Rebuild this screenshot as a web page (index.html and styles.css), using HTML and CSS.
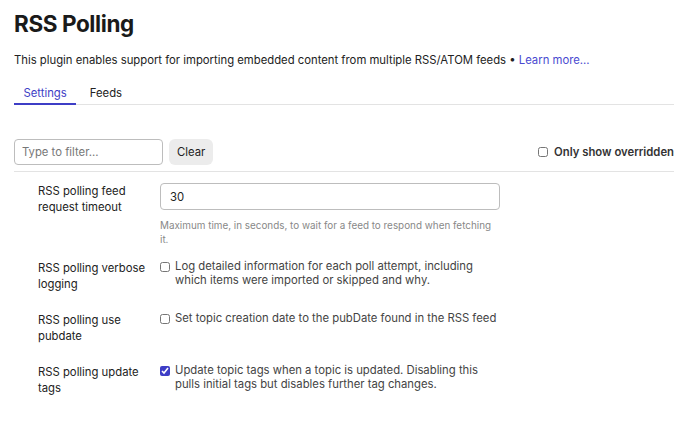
FILE: index.html
```html
<!DOCTYPE html>
<html>
<head>
  <meta charset="utf-8">
  <link rel="stylesheet" href="styles.css">
</head>
<body>
  <div class="plugin-page">
    <h1 class="plugin-title">RSS Polling</h1>
    <p class="plugin-desc">This plugin enables support for importing embedded content from multiple RSS/ATOM feeds &bull; <a href="#">Learn more...</a></p>

    <div class="tabs">
      <a class="tab active" href="#">Settings</a>
      <a class="tab" href="#">Feeds</a>
    </div>

    <div class="filter-bar">
      <div class="filter-left">
        <input class="filter-input" type="text" placeholder="Type to filter...">
        <button class="clear-btn">Clear</button>
      </div>
      <label class="overridden">
        <input type="checkbox">
        <span>Only show overridden</span>
      </label>
    </div>

    <div class="settings">
      <div class="setting-row">
        <div class="setting-label">RSS polling feed request timeout</div>
        <div class="setting-value">
          <input class="text-input" type="text" value="30">
          <div class="help">Maximum time, in seconds, to wait for a feed to respond when fetching it.</div>
        </div>
      </div>

      <div class="setting-row">
        <div class="setting-label">RSS polling verbose logging</div>
        <div class="setting-value">
          <label class="check">
            <input type="checkbox">
            <span>Log detailed information for each poll attempt, including which items were imported or skipped and why.</span>
          </label>
        </div>
      </div>

      <div class="setting-row">
        <div class="setting-label">RSS polling use pubdate</div>
        <div class="setting-value">
          <label class="check">
            <input type="checkbox">
            <span>Set topic creation date to the pubDate found in the RSS feed</span>
          </label>
        </div>
      </div>

      <div class="setting-row">
        <div class="setting-label">RSS polling update tags</div>
        <div class="setting-value">
          <label class="check">
            <input type="checkbox" checked>
            <span>Update topic tags when a topic is updated. Disabling this pulls initial tags but disables further tag changes.</span>
          </label>
        </div>
      </div>
    </div>
  </div>
</body>
</html>
```

FILE: styles.css
```css
* {
  box-sizing: border-box;
  margin: 0;
  padding: 0;
}

body {
  font-family: Inter, "Noto Sans", sans-serif;
  font-size: 11.3px;
  color: #222;
  background: #fff;
}

.plugin-page {
  padding: 10px 16px 0 14px;
}

.plugin-title {
  font-size: 22.5px;
  font-weight: 700;
  line-height: 28px;
  letter-spacing: -0.4px;
  color: #1a1a1a;
}

.plugin-desc {
  margin-top: 14px;
  font-size: 11.3px;
  line-height: 16px;
}

.plugin-desc a {
  color: #4a4ad0;
  text-decoration: none;
}

.tabs {
  display: flex;
  gap: 4px;
  margin-top: 11px;
  border-bottom: 1px solid #e3e3e3;
}

.tab {
  font-size: 11.3px;
  line-height: 16px;
  padding: 6px 9.5px 2px;
  color: #222;
  text-decoration: none;
  border-bottom: 2px solid transparent;
  margin-bottom: -1px;
}

.tab.active {
  color: #3e3ec6;
  border-bottom-color: #3e3ec6;
}

.filter-bar {
  display: flex;
  justify-content: space-between;
  align-items: center;
  margin-top: 34px;
  padding-bottom: 6px;
  border-bottom: 1px solid #e3e3e3;
}

.filter-left {
  display: flex;
  gap: 6px;
}

.filter-input {
  width: 149px;
  height: 26px;
  padding: 0 7px;
  border: 1px solid #bdbdbd;
  border-radius: 4px;
  font-family: inherit;
  font-size: 11.3px;
  color: #222;
}

.filter-input::placeholder {
  color: #777;
}

.clear-btn {
  height: 26px;
  padding: 0 8px;
  border: none;
  border-radius: 6px;
  background: #ececec;
  font-family: inherit;
  font-size: 11.3px;
  color: #222;
}

.overridden {
  display: flex;
  align-items: center;
  gap: 6px;
  font-size: 11.3px;
  font-weight: 600;
  color: #333;
}

input[type="checkbox"] {
  width: 10px;
  height: 10px;
  margin: 0;
  accent-color: #3e3ec6;
  flex-shrink: 0;
}

.settings {
  padding-top: 11px;
}

.setting-row {
  display: flex;
  margin-bottom: 20px;
}

.setting-label {
  width: 146px;
  padding-left: 24px;
  padding-right: 8px;
  font-size: 11.3px;
  line-height: 16px;
  color: #222;
}

.setting-value {
  width: 340px;
}

.text-input {
  width: 340px;
  height: 27px;
  padding: 0 9px;
  border: 1px solid #bdbdbd;
  border-radius: 4px;
  font-family: inherit;
  font-size: 11.3px;
  color: #222;
}

.help {
  margin-top: 8px;
  margin-bottom: -6px;
  font-size: 9.9px;
  line-height: 14px;
  color: #888;
}

.check {
  display: flex;
  align-items: flex-start;
  gap: 5px;
  font-size: 11.3px;
  line-height: 13.5px;
  color: #444;
}

.check input {
  margin-top: 2px;
}
```
